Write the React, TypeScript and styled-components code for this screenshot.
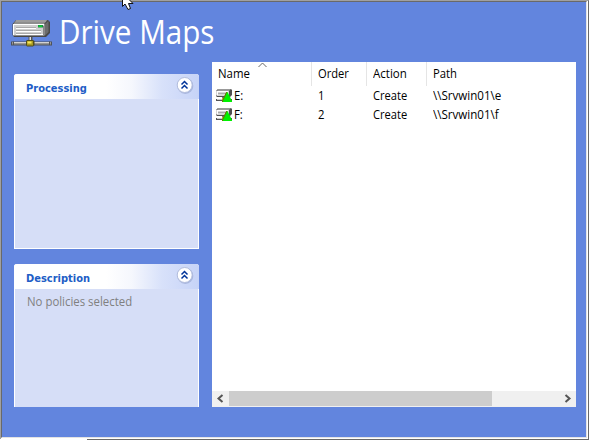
import React from "react";
import styled, { createGlobalStyle } from "styled-components";

const GlobalStyle = createGlobalStyle`
  * { box-sizing: border-box; }
  html, body { margin: 0; padding: 0; overflow: hidden; background: #fff; }
  svg { display: block; }
`;

const Frame = styled.div`
  position: relative;
  width: 589px;
  height: 440px;
  border: 1px solid;
  border-color: #a0a0a0 #696969 #696969 #a0a0a0;
  background: #fff;
  padding: 0 1px 1px 0;
  font-family: "Open Sans", "Noto Sans", sans-serif;
  font-size: 12px;
  color: #000;
`;

const Surface = styled.main`
  width: 586px;
  height: 437px;
  border: 1px solid;
  border-color: #696969 #e3e3e3 #e3e3e3 #696969;
  background: #6285de;
`;

const FooterGap = styled.div`
  position: absolute;
  left: -1px;
  bottom: -1px;
  width: 87px;
  height: 1px;
  background: #fff;
`;

const Header = styled.header`
  display: flex;
  height: 60px;
  padding-left: 9px;
`;

const DriveArt = styled.svg`
  width: 41px;
  height: 30px;
  margin-top: 16px;
  flex: none;
`;

const Label = styled.span<{ $scale?: number }>`
  display: inline-block;
  white-space: nowrap;
  transform-origin: 0 50%;
  transform: scaleX(${(p) => p.$scale ?? 1});
`;

const Title = styled.h1`
  margin: 8px 0 0 7px;
  font-size: 32px;
  line-height: 44px;
  font-weight: 400;
  color: #fff;
`;

const Content = styled.div`
  display: flex;
  gap: 13px;
  padding-left: 12px;
`;

const Sidebar = styled.aside`
  display: flex;
  flex-direction: column;
  gap: 15px;
  width: 185px;
  padding-top: 12px;
`;

const Panel = styled.section<{ $height: number; $open?: boolean }>`
  height: ${(p) => p.$height}px;
  border: 1px solid #fff;
  border-top: 0;
  border-bottom-width: ${(p) => (p.$open ? 0 : 1)}px;
  border-radius: 3px 3px 0 0;
  background: #d6def7;
`;

const PanelHeader = styled.div`
  display: flex;
  justify-content: space-between;
  width: 185px;
  height: 25px;
  margin-left: -1px;
  padding: 2px 5px 0 12px;
  border-radius: 3px 3px 0 0;
  background: linear-gradient(90deg, #fff 0, #fff 92px, #f5f7fd 118px, #d8e1fa 148px, #c6d3f7 185px);
`;

const PanelTitle = styled.h2`
  margin: 0;
  font-family: "DejaVu Sans Condensed", "DejaVu Sans", sans-serif;
  font-stretch: condensed;
  font-size: 11px;
  line-height: 26px;
  height: 23px;
  font-weight: 700;
  color: #215dc6;
`;

const Collapse = styled.button`
  width: 18px;
  height: 19px;
  padding: 0;
  border: 0;
  background: none;
`;

const PanelText = styled.p`
  margin: 4px 0 0 12px;
  line-height: 18px;
  color: #808080;
`;

const ListView = styled.section`
  display: flex;
  flex-direction: column;
  width: 364px;
  height: 345px;
  background: #fff;
`;

const columns = "100px 55px 60px 1fr";

const HeadRow = styled.div`
  display: grid;
  grid-template-columns: ${columns};
  height: 24px;
`;

const HeadCell = styled.div`
  position: relative;
  padding-left: 6px;
  line-height: 24px;
  border-right: 1px solid #e5e5e5;
  &:last-child { border-right: 0; }
`;

const SortMark = styled.svg`
  position: absolute;
  left: 46px;
  top: 0;
  width: 9px;
  height: 6px;
`;

const Rows = styled.div`
  flex: 1;
`;

const Row = styled.div`
  display: grid;
  grid-template-columns: ${columns};
  height: 19px;
  line-height: 19px;
`;

const Cell = styled.div`
  display: flex;
  padding-left: 6px;
`;

const NameCell = styled(Cell)`
  padding-left: 4px;
  gap: 2px;
`;

const RowIcon = styled.svg`
  width: 16px;
  height: 14px;
  margin-top: 3px;
`;

const ScrollBar = styled.div`
  display: grid;
  grid-template-columns: 17px 1fr 17px;
  height: 16px;
  background: #f0f0f0;
`;

const Thumb = styled.div`
  width: 263px;
  height: 15px;
  background: #cdcdcd;
`;

const Arrow = styled.svg`
  width: 17px;
  height: 16px;
`;

const Cursor = styled.svg`
  position: absolute;
  left: 121px;
  top: -1px;
  width: 13px;
  height: 12px;
`;

function NetworkDrive() {
  return (
    <DriveArt viewBox="0 0 41 30">
      <path d="M5 2H37L39 4V15L35 19H3L1.500 17V6Z" fill="#484848" />
      <path d="M5 2H36.500L33 6H2.500Z" fill="#8e8e8e" />
      <path d="M5 3H35" stroke="#aaa" strokeWidth="1" />
      <path d="M34 6L37.500 3V14L34 17.500Z" fill="#6c6c6c" />
      <path d="M2 6H33.500V17.500H2Z" fill="#cfcfcf" />
      <path d="M2 6.500H33M2.500 6V17" stroke="#fff" />
      <path d="M5 10.500H25M5 13.500H30M5 16.500H32" stroke="#fff" />
      <path d="M5 9.500H25M5 12.500H30M5 15.500H30" stroke="#aaa" />
      <path d="M32.500 8V17" stroke="#858585" />
      <path d="M27 7H32V9.500H27Z" fill="#158941" />
      <path d="M27.500 7.500H31V9H27.500Z" fill="#10cf31" />
      <path d="M17.500 19H21.500V23H17.500Z" fill="#555" />
      <path d="M18.500 19H20V23H18.500Z" fill="#ddd" />
      <path d="M0 23.500H41V27.500H0Z" fill="#4d525b" />
      <path d="M1 24H40V26.500H1Z" fill="#969696" />
      <path d="M3 24.500H38" stroke="#d2d2d2" />
      <path d="M2.500 23.500V27M38.500 23.500V27" stroke="#555" />
      <path d="M15 23L16 22H22L23.500 23V27L22 28.500H16L15 27Z" fill="#514d1d" />
      <path d="M16 23H22V27.500H16Z" fill="#a99b22" />
      <path d="M16.500 23.500H20.500V25.500H16.500Z" fill="#f8e85b" />
    </DriveArt>
  );
}

function MappedDrive() {
  return (
    <RowIcon viewBox="0 0 16 14">
      <path d="M2 0H15L16 1V6L14 8H1L0 7V2Z" fill="#505050" />
      <path d="M2 0H15L13 2H1Z" fill="#999" />
      <path d="M0 2H13V7H1L0 6Z" fill="#d5d5d5" />
      <path d="M1 2.500H12M1.500 3V6" stroke="#fff" />
      <path d="M2 4.500H11" stroke="#aaa" />
      <path d="M6 8H9V10H6Z" fill="#777" />
      <path d="M0 10H16V12H0Z" fill="#555" />
      <path d="M1 10H15V11H1Z" fill="#ccc" />
      <path d="M6 9H9V13H6Z" fill="#c8b52e" />
      <path d="M10.500 3H11.500L16 12V13H6V12Z" fill="#00f000" />
      <path d="M10.700 3L6.500 12V13" fill="none" stroke="#716c00" strokeWidth="1" />
    </RowIcon>
  );
}

function CollapseButton() {
  return (
    <Collapse aria-label="Collapse">
      <svg width="18" height="19" viewBox="0 0 18 19">
        <circle cx="9.300" cy="9.900" r="8" fill="#8797c5" opacity=".5" />
        <circle cx="8.700" cy="9" r="7.500" fill="#fff" stroke="#b2bddd" />
        <path d="M5.500 8.500L8.500 5.500L11.500 8.500M5.500 12.500L8.500 9.500L11.500 12.500" fill="none" stroke="#003399" strokeWidth="1.500" />
      </svg>
    </Collapse>
  );
}

const headings = [
  { text: "Name", scale: 0.95 },
  { text: "Order", scale: 0.93 },
  { text: "Action", scale: 0.96 },
  { text: "Path", scale: 0.94 },
];

const mappings = [
  { drive: "E:", order: "1", action: "Create", path: "\\\\Srvwin01\\e" },
  { drive: "F:", order: "2", action: "Create", path: "\\\\Srvwin01\\f" },
];

export default function App() {
  return (
    <>
      <GlobalStyle />
      <Frame>
        <Surface>
          <Header>
            <NetworkDrive />
            <Title><Label $scale={0.925}>Drive Maps</Label></Title>
          </Header>
          <Content>
            <Sidebar>
              <Panel $height={175}>
                <PanelHeader>
                  <PanelTitle><Label>Processing</Label></PanelTitle>
                  <CollapseButton />
                </PanelHeader>
              </Panel>
              <Panel $height={143} $open>
                <PanelHeader>
                  <PanelTitle><Label>Description</Label></PanelTitle>
                  <CollapseButton />
                </PanelHeader>
                <PanelText><Label $scale={0.95}>No policies selected</Label></PanelText>
              </Panel>
            </Sidebar>
            <ListView>
              <HeadRow>
                {headings.map((h, i) => (
                  <HeadCell key={h.text}>
                    <Label $scale={h.scale}>{h.text}</Label>
                    {i === 0 && (
                      <SortMark viewBox="0 0 9 6">
                        <path d="M.5 5L4.500 1L8.500 5" fill="none" stroke="#666" />
                      </SortMark>
                    )}
                  </HeadCell>
                ))}
              </HeadRow>
              <Rows>
                {mappings.map((m) => (
                  <Row key={m.drive}>
                    <NameCell>
                      <MappedDrive />
                      <Label $scale={0.94}>{m.drive}</Label>
                    </NameCell>
                    <Cell><Label $scale={0.94}>{m.order}</Label></Cell>
                    <Cell><Label $scale={0.93}>{m.action}</Label></Cell>
                    <Cell><Label $scale={0.965}>{m.path}</Label></Cell>
                  </Row>
                ))}
              </Rows>
              <ScrollBar>
                <Arrow viewBox="0 0 17 16">
                  <path d="M10.500 4L6.500 7.500L10.500 11" fill="none" stroke="#555" strokeWidth="2" />
                </Arrow>
                <Thumb />
                <Arrow viewBox="0 0 17 16">
                  <path d="M6.500 4L10.500 7.500L6.500 11" fill="none" stroke="#555" strokeWidth="2" />
                </Arrow>
              </ScrollBar>
            </ListView>
          </Content>
        </Surface>
        <Cursor viewBox="0 0 13 12">
          <path d="M.5 -4V6.500L3 4L6 9.500L8.500 8.500L6.500 3.500H11L3.500 -4Z" fill="#fff" stroke="#111" />
        </Cursor>
        <FooterGap />
      </Frame>
    </>
  );
}
